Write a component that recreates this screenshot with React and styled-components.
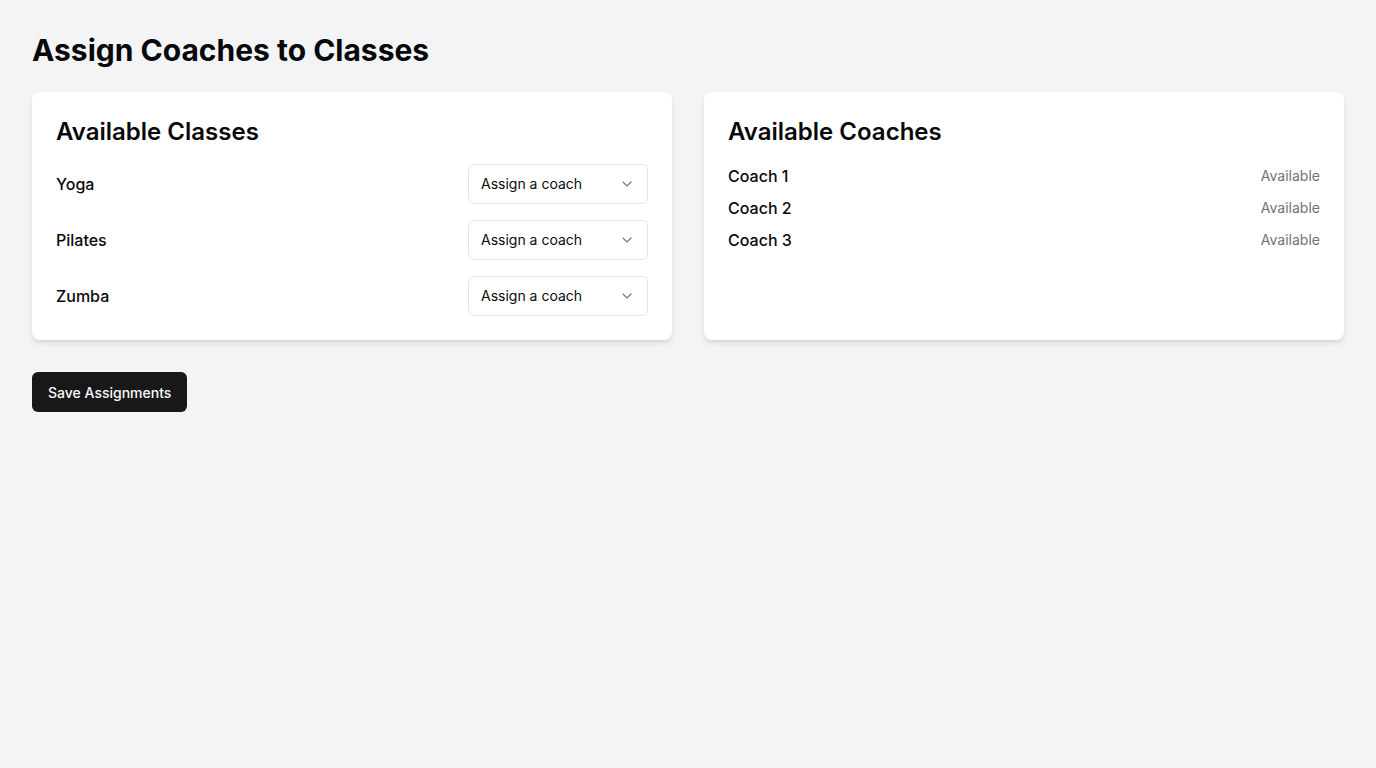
import React from 'react';
import styled, { createGlobalStyle } from 'styled-components';
import { ChevronDown } from 'lucide-react';

const GlobalStyle = createGlobalStyle`
  body {
    margin: 0;
    background: #f3f4f6;
    font-family: Inter, "Noto Sans", sans-serif;
    color: #09090b;
  }
`;

const Page = styled.div`
  padding: 32px;
  min-height: 100vh;
  box-sizing: border-box;
`;

const Title = styled.h1`
  margin: 0 0 24px;
  font-size: 30px;
  line-height: 36px;
  font-weight: 700;
`;

const Grid = styled.div`
  display: grid;
  grid-template-columns: 1fr 1fr;
  gap: 32px;
`;

const Card = styled.div`
  background: #fff;
  border-radius: 8px;
  padding: 24px;
  box-shadow: 0 4px 6px -1px rgba(0, 0, 0, 0.1), 0 2px 4px -2px rgba(0, 0, 0, 0.1);
`;

const CardTitle = styled.h2`
  margin: 0 0 16px;
  font-size: 24px;
  line-height: 32px;
  font-weight: 600;
`;

const List = styled.div`
  display: flex;
  flex-direction: column;
  gap: ${props => props.gap}px;
`;

const Row = styled.div`
  display: flex;
  align-items: center;
  justify-content: space-between;
`;

const Name = styled.span`
  font-size: 16px;
  line-height: 24px;
  font-weight: 500;
`;

const Status = styled.span`
  font-size: 14px;
  line-height: 20px;
  color: #6b7280;
`;

const SelectTrigger = styled.button`
  width: 180px;
  height: 40px;
  display: flex;
  align-items: center;
  justify-content: space-between;
  padding: 0 12px;
  border: 1px solid #e4e4e7;
  border-radius: 6px;
  background: #fff;
  font-family: inherit;
  font-size: 14px;
  line-height: 20px;
  color: #09090b;
  cursor: pointer;

  span {
    margin-top: -1px;
  }

  svg {
    opacity: 0.5;
  }
`;

const SaveButton = styled.button`
  margin-top: 32px;
  height: 40px;
  padding: 0 16px;
  border: none;
  border-radius: 6px;
  background: #18181b;
  color: #fafafa;
  font-family: inherit;
  font-size: 14px;
  font-weight: 500;
  cursor: pointer;
`;

const classes = ['Yoga', 'Pilates', 'Zumba'];
const coaches = ['Coach 1', 'Coach 2', 'Coach 3'];

export default function App() {
  return (
    <Page>
      <GlobalStyle />
      <Title>Assign Coaches to Classes</Title>
      <Grid>
        <Card>
          <CardTitle>Available Classes</CardTitle>
          <List gap={16}>
            {classes.map((c) => (
              <Row key={c}>
                <Name>{c}</Name>
                <SelectTrigger>
                  <span>Assign a coach</span>
                  <ChevronDown size={16} />
                </SelectTrigger>
              </Row>
            ))}
          </List>
        </Card>
        <Card>
          <CardTitle>Available Coaches</CardTitle>
          <List gap={8}>
            {coaches.map((c) => (
              <Row key={c}>
                <Name>{c}</Name>
                <Status>Available</Status>
              </Row>
            ))}
          </List>
        </Card>
      </Grid>
      <SaveButton>Save Assignments</SaveButton>
    </Page>
  );
}
